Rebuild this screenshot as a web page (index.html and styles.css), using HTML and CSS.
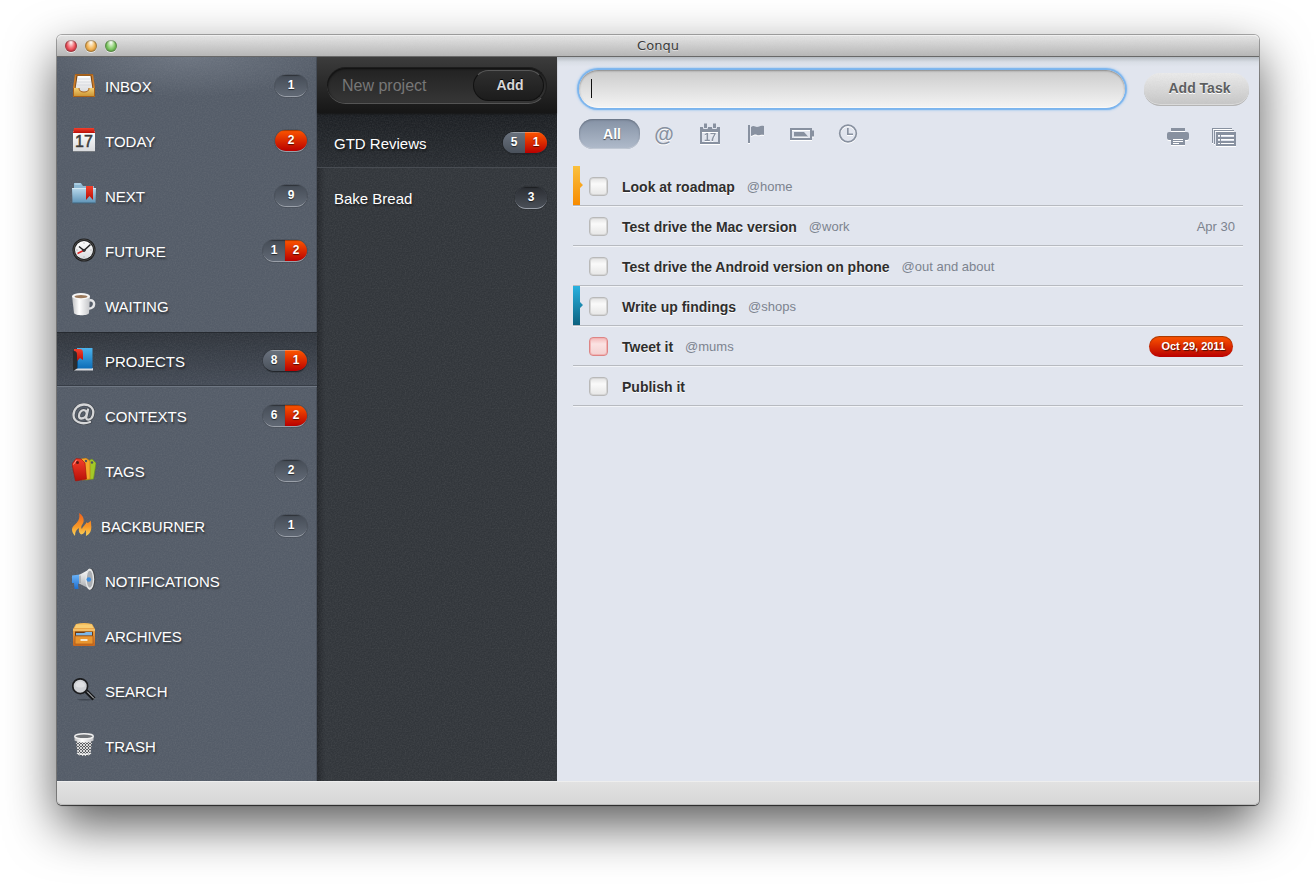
FILE: index.html
```html
<!DOCTYPE html>
<html lang="en">
<head>
    <meta charset="UTF-8">
    <meta name="viewport" content="width=device-width, initial-scale=1.0">
    <title>Conqu</title>
    <link rel="stylesheet" href="styles.css">
</head>
<body>
    <!-- gradients shared by the icons -->
    <svg class="defs" width="0" height="0" aria-hidden="true">
        <defs>
            <linearGradient id="gold" x1="0" y1="0" x2="0" y2="1"><stop offset="0" stop-color="#f3cf74"/><stop offset="1" stop-color="#c98f2c"/></linearGradient>
            <linearGradient id="wood" x1="0" y1="0" x2="0" y2="1"><stop offset="0" stop-color="#f6bb55"/><stop offset="1" stop-color="#c8661c"/></linearGradient>
            <linearGradient id="paper" x1="0" y1="0" x2="0" y2="1"><stop offset="0" stop-color="#ffffff"/><stop offset="1" stop-color="#d9dbde"/></linearGradient>
            <linearGradient id="red" x1="0" y1="0" x2="0" y2="1"><stop offset="0" stop-color="#f4402c"/><stop offset="1" stop-color="#b80f08"/></linearGradient>
            <linearGradient id="folder" x1="0" y1="0" x2="0" y2="1"><stop offset="0" stop-color="#b9d9ec"/><stop offset="1" stop-color="#5f94b8"/></linearGradient>
            <linearGradient id="book" x1="0" y1="0" x2="0" y2="1"><stop offset="0" stop-color="#4cb4ee"/><stop offset="1" stop-color="#0d6db8"/></linearGradient>
            <linearGradient id="cup" x1="0" y1="0" x2="1" y2="0"><stop offset="0" stop-color="#bfc0c2"/><stop offset=".4" stop-color="#ffffff"/><stop offset="1" stop-color="#c4c5c8"/></linearGradient>
            <linearGradient id="fire" x1="0" y1="0" x2="0" y2="1"><stop offset="0" stop-color="#f0601c"/><stop offset=".6" stop-color="#f79a28"/><stop offset="1" stop-color="#fcd65c"/></linearGradient>
            <linearGradient id="silver" x1="0" y1="0" x2="0" y2="1"><stop offset="0" stop-color="#ffffff"/><stop offset="1" stop-color="#a4a7ab"/></linearGradient>
            <linearGradient id="blue" x1="0" y1="0" x2="0" y2="1"><stop offset="0" stop-color="#6cb4f8"/><stop offset="1" stop-color="#1d6fd0"/></linearGradient>
            <pattern id="mesh" width="3" height="3" patternUnits="userSpaceOnUse"><path d="M0 0l3 3M3 0L0 3" stroke="#f2f2f2" stroke-width=".8"/></pattern>
        </defs>
    </svg>

    <div class="window">
        <header class="titlebar">
            <div class="lights">
                <button class="light close" aria-label="Close"></button>
                <button class="light minimize" aria-label="Minimize"></button>
                <button class="light zoom" aria-label="Zoom"></button>
            </div>
            <h1>Conqu</h1>
        </header>

        <div class="content">
            <nav class="sidebar">
                <a href="#inbox">
                    <svg class="icon" viewBox="0 0 24 24"><path d="M3 1h18l2 14v9H1v-9z" fill="#c97a27"/><path d="M4.500 2.500h15l1.500 13H3z" fill="#6f4215"/><path d="M5.500 3h13l2 13-3 3H7l-3.500-3z" fill="url(#paper)"/><path d="M5.500 6h13M5 9h14M5 12h14" stroke="#d3d6dc" stroke-width=".8"/><path d="M1 15h6c0 3 2 4 5 4s5-1 5-4h6v9H1z" fill="url(#gold)"/><path d="M7 15c0 3 2 4 5 4s5-1 5-4M1.500 15v8.500h21V15M3 1.500h18" fill="none" stroke="#a8611b"/></svg>
                    <span class="name">INBOX</span>
                    <span class="badge"><b>1</b></span>
                </a>
                <a href="#today">
                    <svg class="icon" viewBox="0 0 24 24"><path d="M1 3h22v20H1z" fill="url(#paper)"/><path d="M2 0h20l1 5H1z" fill="url(#red)"/><path d="M1 23.500h22" stroke="#777b80"/><text x="12" y="19" class="day">17</text></svg>
                    <span class="name">TODAY</span>
                    <span class="badge"><b class="due">2</b></span>
                </a>
                <a href="#next">
                    <svg class="icon" viewBox="0 0 24 24"><path d="M2 0h7l2 3h11v9H2z" fill="#8db8d3"/><path d="M2.500 1h6" stroke="#c9e2f0"/><path d="M0 5h24l-.5 15H.5z" fill="url(#folder)"/><path d="M0 5.500h24" stroke="#d2e8f4"/><path d="M.5 20h23" stroke="#41647c"/><path d="M14 3h7v14l-3.500-4L14 17z" fill="url(#red)"/></svg>
                    <span class="name">NEXT</span>
                    <span class="badge"><b>9</b></span>
                </a>
                <a href="#future">
                    <svg class="icon" viewBox="0 0 24 24"><circle cx="12" cy="12" r="11.500" fill="#1d1d1d"/><circle cx="12" cy="12" r="10.300" fill="none" stroke="#484848"/><circle cx="12" cy="12" r="9" fill="url(#paper)"/><path d="M12 4.500v1M12 18.500v1M4.500 12h1M18.500 12h1" stroke="#999"/><path d="M5.500 15.500l8-4" stroke="#d22" stroke-width="1.400"/><path d="M7 8.500l5 4L18.500 6.500" fill="none" stroke="#222" stroke-width="1.500"/><circle cx="12" cy="12.300" r="1.600" fill="#333"/></svg>
                    <span class="name">FUTURE</span>
                    <span class="badge"><b>1</b><b class="due">2</b></span>
                </a>
                <a href="#waiting">
                    <svg class="icon" viewBox="0 0 24 24"><path d="M17 7.500c7-2 7 9-1 8" fill="none" stroke="#e4e5e7" stroke-width="2.400"/><path d="M0 3h18l-1 17c-.5 3-14 3-15 0z" fill="url(#cup)"/><ellipse cx="9" cy="3.200" rx="9" ry="3.200" fill="#f6f6f6"/><ellipse cx="9" cy="3.600" rx="6.500" ry="1.700" fill="#9c7a5c"/></svg>
                    <span class="name">WAITING</span>
                </a>
                <a href="#projects" class="selected">
                    <svg class="icon" viewBox="0 0 24 24"><path d="M1 3l5-2.500V20l-4 2.500H1z" fill="#2b2c2e"/><path d="M2 22.500l4-2.500h15v2.500z" fill="#d8dade"/><path d="M5 0h15.500v20.500H5z" fill="url(#book)"/><path d="M5.500 1v19" stroke="#0d4f86"/><path d="M2 1h6c3 0 3 3 3 5v6L8 10l-3 3V7C5 4 4 3 2 3z" fill="url(#red)"/></svg>
                    <span class="name">PROJECTS</span>
                    <span class="badge raised"><b>8</b><b class="due">1</b></span>
                </a>
                <a href="#contexts">
                    <svg class="icon" viewBox="0 0 24 24"><g fill="none" stroke-linecap="round"><path d="M16 6.500l-1.700 7.500c-.8 4 5 3.400 6.500-1.500C23 5 17.500 1.500 12 1.500S1.500 6 1.500 12s7 10.500 16.500 7M14.800 10.500C14.500 7 11 6 8.700 8.500s-2.500 7 .6 7 5.200-2.500 5.500-5z" stroke="#3f444b" stroke-width="3.600"/><path d="M16 6.500l-1.700 7.500c-.8 4 5 3.400 6.500-1.500C23 5 17.500 1.500 12 1.500S1.500 6 1.500 12s7 10.500 16.500 7M14.800 10.500C14.500 7 11 6 8.700 8.500s-2.500 7 .6 7 5.200-2.500 5.500-5z" stroke="#d5d6d8" stroke-width="2.300"/></g></svg>
                    <span class="name">CONTEXTS</span>
                    <span class="badge"><b>6</b><b class="due">2</b></span>
                </a>
                <a href="#tags">
                    <svg class="icon" viewBox="0 0 24 24"><path d="M16 3l4-2 4 4-2.500 16-8 1z" fill="#a3c829" stroke="#6f9414" stroke-width=".6"/><circle cx="20" cy="4.500" r="1.200" fill="#4d5560"/><path d="M9 1l5-1 4 3v18l-8 1z" fill="#f3a72a" stroke="#c0740f" stroke-width=".6"/><circle cx="14" cy="3" r="1.200" fill="#4d5560"/><path d="M0 6l4-5.500 5 .5 4 4 1.500 16L3.500 23z" fill="url(#red)" stroke="#a01208" stroke-width=".6"/><circle cx="5.500" cy="4.500" r="1.500" fill="#5a1a16"/><path d="M1.500 6.500L4.500 2" stroke="#ff9488"/></svg>
                    <span class="name">TAGS</span>
                    <span class="badge"><b>2</b></span>
                </a>
                <a href="#backburner">
                    <svg class="icon narrow" viewBox="0 0 20 24"><path d="M3 23C-1 18-1 15 3 11.500 7 8 8 5 7 0c5 3 6 8 3 12-1 1.500-1 3 0 4 .5-3 5-5 4.500-8 0 0 0 1 .5 2 1 0 4-1.500 4-3-.5 3 1 6 0 10-.5 3-3 5-5 6 0-2 .5-4-.5-6-1 3-2 4-4.500 4.500C7 20 6.500 18 7 15c-3 2-4 4-4 8z" fill="url(#fire)"/></svg>
                    <span class="name">BACKBURNER</span>
                    <span class="badge"><b>1</b></span>
                </a>
                <a href="#notifications">
                    <svg class="icon" viewBox="0 0 24 24"><path d="M0 7.500L8 6.500v9l-2 .2.500 5.300H2.500L2 15H0z" fill="url(#blue)"/><path d="M7 7l11-6v20L7 15.500z" fill="url(#silver)"/><path d="M8 7.500v7.500" stroke="#8c8f93"/><ellipse cx="18.800" cy="11.300" rx="4.600" ry="11" fill="#46494d"/><ellipse cx="17.800" cy="11.300" rx="4.400" ry="10.700" fill="#e6e7e8"/><ellipse cx="17.800" cy="11.300" rx="3" ry="8.500" fill="#aaadb1"/><circle cx="16.800" cy="11.500" r="2.300" fill="#3c8de0"/></svg>
                    <span class="name">NOTIFICATIONS</span>
                </a>
                <a href="#archives">
                    <svg class="icon" viewBox="0 0 24 24"><path d="M4 1q8-2 16 0l3 5v16q0 1-1 1H2q-1 0-1-1V6z" fill="url(#wood)"/><path d="M4.500 1.500h15l2 3.500h-19z" fill="#f8cd73"/><path d="M1 7h22" stroke="#ffd98a"/><path d="M3 8.500h18V13H3z" fill="#6d3a10"/><path d="M4 10h8l2-1h6v3.500H4z" fill="#7cb7e8"/><path d="M3 13h18v8H3z" fill="#e9962f" stroke="#b3611a" stroke-width=".8"/><path d="M8.500 17h7" stroke="#f6e9cf" stroke-width="2"/></svg>
                    <span class="name">ARCHIVES</span>
                </a>
                <a href="#search">
                    <svg class="icon" viewBox="0 0 24 24"><ellipse cx="13" cy="21.800" rx="8" ry=".8" fill="#3f4650"/><path d="M14 13l8 8" stroke="#16181b" stroke-width="4.200"/><path d="M15 13.500l7 7" stroke="#e3e3e3" stroke-width="1"/><circle cx="8.200" cy="8.200" r="7.400" fill="#cfd1d5" stroke="#1c1d1f" stroke-width="1.700"/><path d="M3.500 8c0-6 9-6 9.500 0-2 2-7 2-9.500 0z" fill="#dfe0e3"/></svg>
                    <span class="name">SEARCH</span>
                </a>
                <a href="#trash">
                    <svg class="icon" viewBox="0 0 24 24"><path d="M3.500 5h17l-2 16c-1 2.500-12 2.500-13 0z" fill="#5b5e62"/><path d="M3.500 5h17l-2 16c-1 2.500-12 2.500-13 0z" fill="url(#mesh)"/><path d="M5 20c3 2 11 2 14 0" fill="none" stroke="#eee" stroke-width="1.500"/><path d="M2.500 3.500v4c4 2.500 15 2.500 19 0v-4z" fill="url(#cup)"/><ellipse cx="12" cy="3.300" rx="9.300" ry="2.500" fill="#6f7276" stroke="#f1f1f1" stroke-width="1.400"/></svg>
                    <span class="name">TRASH</span>
                </a>
            </nav>

            <section class="projects">
                <form class="new-project">
                    <div class="shell">
                        <input type="text" placeholder="New project" aria-label="New project">
                        <button type="button">Add</button>
                    </div>
                </form>
                <a href="#gtd" class="selected">
                    <span class="name">GTD Reviews</span>
                    <span class="badge raised"><b>5</b><b class="due">1</b></span>
                </a>
                <a href="#bread">
                    <span class="name">Bake Bread</span>
                    <span class="badge dark"><b>3</b></span>
                </a>
            </section>

            <main>
                <form class="new-task">
                    <input type="text" aria-label="New task">
                    <button type="button">Add Task</button>
                </form>
                <div class="toolbar">
                    <div class="filters">
                        <button class="all">All</button>
                        <button aria-label="Contexts"><span class="at">@</span></button>
                        <button aria-label="Dates"><svg width="22" height="22" viewBox="0 0 22 22"><path d="M1 4h20v17H1zM3 9v10h16V9z" fill-rule="evenodd"/><path d="M4.500 0h4v5.500h-4zM13.500 0h4v5.500h-4z" stroke="#e1e5ee" stroke-width="1"/><text x="11" y="18" class="date">17</text></svg></button>
                        <button aria-label="Flagged"><svg width="22" height="22" viewBox="0 0 22 22"><path d="M3 2h2v18H3zM6 4c3-2 4 0 6 0s3-2 7-1v9c-3-1-5 1-7 0s-3 0-6 1z"/></svg></button>
                        <button aria-label="Energy"><svg width="24" height="22" viewBox="0 0 24 22"><path d="M0 5h22v2.500h2v6h-2V17H0zM2 7v8h18V7z" fill-rule="evenodd"/><path d="M4 9h10l4 4.500H4z"/></svg></button>
                        <button aria-label="Time"><svg width="22" height="22" viewBox="0 0 22 22"><circle cx="11" cy="10.500" r="8.300" fill="none" stroke="#8891a0" stroke-width="1.700"/><path d="M10 5h1.700v5.500H16V12h-6z"/></svg></button>
                    </div>
                    <div class="actions">
                        <button aria-label="Print"><svg width="22" height="20" viewBox="0 0 22 20"><path d="M4 1h14v3H4zM2 5h18q2 0 2 2v4q0 2-2 2h-2v-3H4v3H2q-2 0-2-2V7q0-2 2-2z"/><path d="M4 10h14v8H4zM6 12v1h10v-1zM6 14v1h10v-1zM6 16v1h6v-1z" fill-rule="evenodd"/></svg></button>
                        <button aria-label="View options"><svg width="24" height="20" viewBox="0 0 24 20"><path d="M0 1h20v1H1v14H0zM2 3h20v1H3v13H2z"/><path d="M4 5h20v14H4zM6 8v2h2V8zM9 8v2h13V8zM6 12v2h2v-2zM9 12v2h13v-2zM6 16v1h2v-1zM9 16v1h13v-1z" fill-rule="evenodd"/></svg></button>
                    </div>
                </div>
                <ul class="tasks">
                    <li class="flag orange"><input type="checkbox" id="t1"><label for="t1">Look at roadmap</label><span class="context">@home</span></li>
                    <li><input type="checkbox" id="t2"><label for="t2">Test drive the Mac version</label><span class="context">@work</span><time>Apr 30</time></li>
                    <li><input type="checkbox" id="t3"><label for="t3">Test drive the Android version on phone</label><span class="context">@out and about</span></li>
                    <li class="flag blue"><input type="checkbox" id="t4"><label for="t4">Write up findings</label><span class="context">@shops</span></li>
                    <li class="late"><input type="checkbox" id="t5"><label for="t5">Tweet it</label><span class="context">@mums</span><time>Oct 29, 2011</time></li>
                    <li><input type="checkbox" id="t6"><label for="t6">Publish it</label></li>
                </ul>
            </main>
        </div>

        <footer></footer>
    </div>
</body>
</html>
```
FILE: styles.css
```css
:root {
    --noise: url("data:image/svg+xml,%3Csvg xmlns='http://www.w3.org/2000/svg' width='120' height='120'%3E%3Cfilter id='n'%3E%3CfeTurbulence type='fractalNoise' baseFrequency='.7' numOctaves='2' stitchTiles='stitch'/%3E%3CfeColorMatrix values='0 0 0 0 .5 0 0 0 0 .5 0 0 0 0 .5 1.500 0 0 0 -.5'/%3E%3C/filter%3E%3Crect width='120' height='120' filter='url(%23n)' opacity='.12'/%3E%3C/svg%3E");
}
* {
    box-sizing: border-box;
}
body {
    margin: 0;
    min-height: 100vh;
    padding: 35px 57px 79px;
    display: flex;
    flex-direction: column;
    background: #fff;
    font-family: "Liberation Sans", Arial, sans-serif;
}
.defs {
    position: absolute;
}
button, input {
    font-family: inherit;
    margin: 0;
    border: none;
    outline: none;
}
button {
    cursor: pointer;
}
a {
    color: inherit;
    text-decoration: none;
}

/* window */
.window {
    flex: 1;
    display: flex;
    flex-direction: column;
    border-radius: 5px;
    box-shadow: 0 0 0 1px rgba(0, 0, 0, 0.3), 0 1px 1px rgba(0, 0, 0, 0.5), 0 20px 50px rgba(0, 0, 0, 0.65);
}
.titlebar {
    display: grid;
    grid-template-columns: 1fr auto 1fr;
    align-items: center;
    height: 22px;
    padding: 0 8px;
    border-bottom: 1px solid #686868;
    border-radius: 5px 5px 0 0;
    background: var(--noise), linear-gradient(#e6e6e6, #b6b6b6);
    box-shadow: inset 0 1px 0 #f0f0f0;
}
.titlebar h1 {
    margin: 0;
    font: 13px "DejaVu Sans", sans-serif;
    color: #3c3c3c;
    text-shadow: 0 1px 0 rgba(255, 255, 255, 0.5);
}
.lights {
    display: flex;
    gap: 8px;
}
.light {
    width: 12px;
    height: 12px;
    padding: 0;
    border-radius: 50%;
    box-shadow: inset 0 0 1px 1px rgba(0, 0, 0, 0.35), 0 1px 0 rgba(255, 255, 255, 0.6);
}
.close {
    background: radial-gradient(ellipse at 50% 20%, #fff 0, #f4757c 40%, #e2414d 60%, #ffa3a8 100%);
}
.minimize {
    background: radial-gradient(ellipse at 50% 20%, #fff 0, #f6c473 40%, #eba544 60%, #ffeaa8 100%);
}
.zoom {
    background: radial-gradient(ellipse at 50% 20%, #fff 0, #99d680 40%, #6dbb53 60%, #d4f8ba 100%);
}
.content {
    flex: 1;
    display: flex;
}
footer {
    height: 24px;
    border-radius: 0 0 5px 5px;
    background: linear-gradient(#e2e2e2, #d6d6d6);
    box-shadow: inset 0 1px 0 #eee, inset 0 -1px 0 #bbb;
}

/* sidebar */
.sidebar {
    flex: 0 0 260px;
    background: var(--noise), radial-gradient(ellipse 150px 40px at 50% 0, #6c7480, rgba(108, 116, 128, 0)), #545c68;
    box-shadow: inset -1px 0 0 #4a515c;
}
.sidebar a, .projects a {
    display: flex;
    align-items: center;
    height: 55px;
    padding: 4px 10px 0 15px;
    font-size: 15px;
    color: #fff;
    text-shadow: 1px 2px 2px rgba(0, 0, 0, 0.5);
}
.sidebar .selected {
    border-bottom: 1px solid #6f7783;
    background: var(--noise), linear-gradient(#30353c, #454c57);
    box-shadow: inset 0 1px 0 #262a30, inset 0 -1px 0 #373d46;
}
.icon {
    width: 24px;
    height: 24px;
    margin: 0 9px 3px 0;
}
.icon.narrow {
    width: 20px;
}
.icon .day {
    font-size: 16px;
    text-anchor: middle;
    fill: #3b3b3b;
    stroke: #3b3b3b;
    stroke-width: 0.5px;
    text-shadow: none;
}
.name {
    flex: 1;
}

/* count badges */
.badge {
    display: flex;
    min-width: 32px;
    height: 22px;
    margin-bottom: 1px;
    border-radius: 11px;
    overflow: hidden;
    border-bottom: 1px solid #9aa0a9;
    background: #4c535e;
    box-shadow: 0 0 0 1px rgba(0, 0, 0, 0.12);
    font-size: 12px;
    line-height: 20px;
    text-align: center;
    text-shadow: 0 1px 1px rgba(0, 0, 0, 0.6);
}
.badge b {
    flex: 1;
    min-width: 22px;
    background: linear-gradient(#454c56, #616975);
    box-shadow: inset 0 1px 1px rgba(0, 0, 0, 0.35);
}
.badge .due {
    background: linear-gradient(#fd5600, #b90000);
}
.badge.raised {
    border-bottom-color: #22262b;
}
.badge.raised b {
    background: linear-gradient(#6a727e, #4a515b);
    box-shadow: inset 0 1px 0 rgba(255, 255, 255, 0.3);
}
.badge.raised .due {
    background: linear-gradient(#fd5600, #b90000);
}
.badge.dark b {
    background: linear-gradient(#2b2e33, #4a4f57);
}

/* projects */
.projects {
    flex: 0 0 240px;
    min-width: 0;
    background: var(--noise), linear-gradient(90deg, #24272b, rgba(36, 39, 43, 0) 8px), #32363b;
}
.projects a {
    padding: 6px 10px 0 17px;
}
.projects .selected {
    border-bottom: 1px solid #484c52;
    background: var(--noise), linear-gradient(#1c1f23, #2a2e33);
}
.new-project {
    position: relative;
    height: 56px;
    padding: 10px 10px 0;
    background: linear-gradient(#3c3c3c, #161616);
    box-shadow: 0 2px 2px -1px #151515;
}
.shell {
    display: flex;
    align-items: center;
    height: 37px;
    padding: 0 2px 0 15px;
    border: 1px solid #1d1d1d;
    border-left: none;
    border-bottom-color: #555;
    border-radius: 19px;
    background: linear-gradient(#222, #363636);
    box-shadow: inset 1px 1px 2px rgba(0, 0, 0, 0.6);
}
.shell input {
    flex: 1;
    width: 0;
    padding: 0;
    background: none;
    color: #ddd;
    font-size: 16px;
}
.shell input::placeholder {
    color: #777;
}
.shell button {
    flex: none;
    width: 71px;
    height: 31px;
    padding: 0 0 2px 3px;
    border: 1px solid #111;
    border-top-color: #585858;
    border-radius: 16px;
    background: linear-gradient(#2f2f2f, #1c1c1c);
    color: #d8d8d8;
    font-size: 14px;
    font-weight: bold;
    text-shadow: 0 -1px 0 #000;
}

/* tasks */
main {
    flex: 1;
    min-width: 0;
    padding-top: 13px;
    background: linear-gradient(#b4bac0, #d9dee6 5px, #e1e5ee 10px);
}
.new-task {
    display: flex;
    align-items: center;
    gap: 19px;
    padding: 0 10px 0 22px;
}
.new-task input {
    flex: 1;
    min-width: 0;
    height: 38px;
    padding: 0 12px;
    border-radius: 19px;
    /* text cursor on top of the field's own gradient */
    background: linear-gradient(#111, #111) 12px 9px / 1px 19px no-repeat, linear-gradient(#cbcbcb, #f4f4f4);
    box-shadow: inset 0 1px 2px #888, inset 0 -1px 0 #fff, 0 0 1px 2px #7ab4ee, 0 0 3px 2px #a3c9ef;
    font-size: 16px;
    caret-color: transparent;
}
.new-task button {
    width: 105px;
    height: 33px;
    padding: 0 0 2px 6px;
    border-bottom: 1px solid #b4b4b4;
    border-radius: 16px;
    background: var(--noise), linear-gradient(#ebebeb, #c6c6c6);
    box-shadow: inset 0 -1px 0 #dadada;
    color: #5c5e60;
    font-size: 14px;
    font-weight: bold;
    text-shadow: 0 1px 0 #fff;
}
.toolbar {
    display: flex;
    justify-content: space-between;
    padding: 11px 12px 14px 22px;
}
.filters, .actions {
    display: flex;
    align-items: flex-start;
}
.actions {
    padding-top: 3px;
}
.toolbar button {
    display: flex;
    align-items: center;
    justify-content: center;
    width: 46px;
    height: 30px;
    padding: 0;
    background: none;
    color: #8891a0;
}
.toolbar svg {
    fill: #8891a0;
    filter: drop-shadow(0 1px 0 #fff);
}
.toolbar .date {
    font-size: 11px;
    font-weight: bold;
    text-anchor: middle;
}
.toolbar .at {
    font-size: 20px;
    font-weight: bold;
    text-shadow: 0 1px 0 #fff;
}
.toolbar .all {
    width: 61px;
    margin-right: 1px;
    padding-left: 5px;
    border-radius: 14px;
    background: linear-gradient(#8592a5, #b0bbcb);
    box-shadow: inset 0 1px 2px #667080, inset 0 -1px 0 #c6cdd8;
    color: #fff;
    font-size: 14px;
    font-weight: bold;
    text-shadow: 0 1px 1px rgba(0, 0, 0, 0.6);
}
.tasks {
    margin: 0 16px;
    padding: 0;
    list-style: none;
}
.tasks li {
    position: relative;
    display: flex;
    align-items: center;
    height: 40px;
    padding: 2px 8px 0 16px;
    border-bottom: 1px solid #b7bac0;
    box-shadow: 0 1px 0 #f2f4f8;
    font-size: 13px;
    color: #7c838e;
}
.tasks input {
    appearance: none;
    flex: none;
    width: 19px;
    height: 19px;
    margin-right: 14px;
    border: 1px solid #b9b9b9;
    border-radius: 4px;
    background: linear-gradient(#e2e2e2, #fafafa 35%, #e6e6e6);
    box-shadow: inset 0 0 0 1px #d6d6d6;
}
.tasks label {
    margin-right: 12px;
    font-size: 14px;
    font-weight: bold;
    color: #2e2e2e;
    text-shadow: 0 1px 0 #fff;
}
.tasks time {
    margin-left: auto;
}
.tasks .late input {
    border-color: #dd8585;
    background: linear-gradient(#f3b9b9, #fbe3e3 35%, #f3d0d0);
    box-shadow: inset 0 0 0 1px #f2b4b4;
}
.tasks .late time {
    margin-right: 2px;
    padding: 0 8px 0 12px;
    border-radius: 11px;
    background: linear-gradient(#fd5600, #b90000);
    box-shadow: inset 0 1px 1px rgba(0, 0, 0, 0.35);
    color: #fff;
    font-size: 11px;
    font-weight: bold;
    line-height: 21px;
    text-shadow: 1px 1px 1px rgba(0, 0, 0, 0.6);
}

/* coloured priority markers on the row's left edge */
.flag::before {
    content: "";
    position: absolute;
    top: 0;
    bottom: 0;
    left: 0;
    width: 10px;
    clip-path: polygon(0 0, 7px 0, 7px 16px, 10px 19px, 7px 22px, 7px 100%, 0 100%);
}
.orange::before {
    background: linear-gradient(#fac03d, #f78b00);
}
.blue::before {
    background: linear-gradient(#28b1e0, #0c627f);
}
```
